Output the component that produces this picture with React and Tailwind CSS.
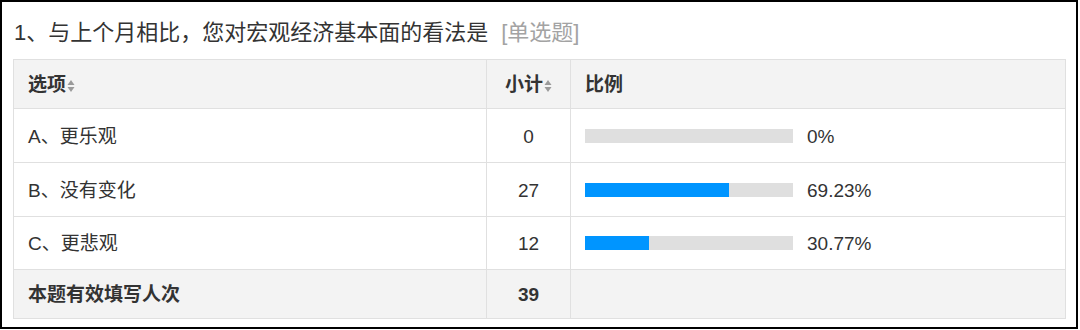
import React from 'react';

const FONT = { fontFamily: '"Liberation Sans", "Noto Sans CJK SC", sans-serif' };

const rows = [
  { label: 'A、更乐观', count: 0, pct: 0, text: '0%' },
  { label: 'B、没有变化', count: 27, pct: 69.23, text: '69.23%' },
  { label: 'C、更悲观', count: 12, pct: 30.77, text: '30.77%' },
];

// little up/down sort arrows next to header labels
const SortIcon = () => (
  <svg width="8" height="14" viewBox="0 0 8 14" className="ml-[1px] inline-block align-[-2px]">
    <path d="M4 1 L7.5 6 L0.5 6 Z" fill="#9a9a9a" />
    <path d="M4 13 L7.5 8 L0.5 8 Z" fill="#9a9a9a" />
  </svg>
);

const cell = 'border border-[#e0e0e0] pt-[3px]';

const App = () => {
  return (
    <div className="bg-white w-[1080px] h-[330px]" style={FONT}>
      <div className="w-[1078px] h-[329px] border-2 border-black">
        {/* Question title */}
        <div className="h-[57px] pt-[16px] pl-[12px] text-[22px] leading-[30px] text-[#333333] whitespace-nowrap">
          1、与上个月相比，您对宏观经济基本面的看法是
          <span className="ml-[13px] text-[#a3a3a3]">[单选题]</span>
        </div>

        {/* Results table */}
        <table className="ml-[11px] border-collapse text-[19px] text-[#333333]">
          <thead>
            <tr className="h-[49px] bg-[#f3f3f3]">
              <th className={`w-[473px] ${cell} pl-[14px] text-left font-bold`}>
                选项<SortIcon />
              </th>
              <th className={`w-[84px] ${cell} text-center font-bold`}>
                小计<SortIcon />
              </th>
              <th className={`w-[495px] ${cell} pl-[14px] text-left font-bold`}>比例</th>
            </tr>
          </thead>
          <tbody>
            {rows.map((r, i) => (
              <tr key={r.label} className={i === 2 ? 'h-[53px]' : 'h-[54px]'}>
                <td className={`${cell} pl-[14px]`}>{r.label}</td>
                <td className={`${cell} text-center`}>{r.count}</td>
                <td className={`${cell} pl-[14px]`}>
                  <div className="flex items-center">
                    <div className="w-[208px] h-[14px] bg-[#dfdfdf] -mt-[3px]">
                      <div className="h-full bg-[#0095ff]" style={{ width: `${r.pct}%` }} />
                    </div>
                    <span className="ml-[14px]">{r.text}</span>
                  </div>
                </td>
              </tr>
            ))}
            <tr className="h-[49px] bg-[#f3f3f3] font-bold">
              <td className={`${cell} pl-[14px]`}>本题有效填写人次</td>
              <td className={`${cell} text-center`}>39</td>
              <td className={cell}></td>
            </tr>
          </tbody>
        </table>
      </div>
    </div>
  );
};

export default App;
